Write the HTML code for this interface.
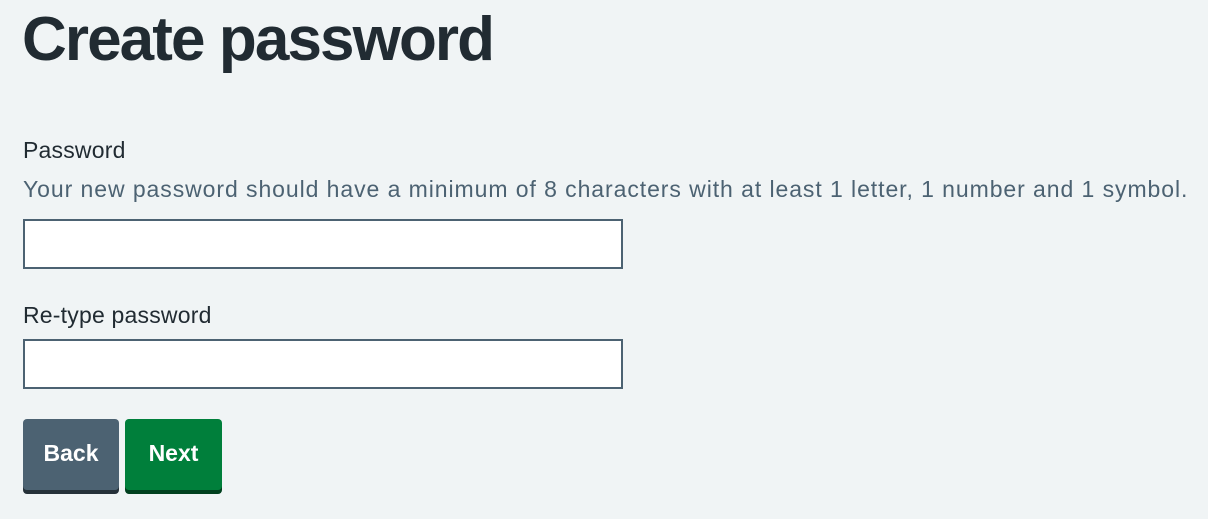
<!DOCTYPE html>
<html><head><style>
body{margin:0;background:#f0f4f5;font-family:"Liberation Sans",sans-serif;color:#212b32;width:1208px;height:519px;overflow:hidden;position:relative}
.a{position:absolute;margin:0;white-space:nowrap}
h1{font-size:62px;font-weight:bold;left:22px;top:4px;letter-spacing:-1.9px}
.l{font-size:23px;left:23px;letter-spacing:0.2px}
.h{color:#4c6272}
.i{position:absolute;left:23px;width:596px;height:46px;border:2px solid #4c6272;background:#fff}
.b{position:absolute;top:419px;height:71px;border-radius:4px;color:#fff;font-weight:bold;font-size:23px;text-align:center;line-height:68px}
</style></head><body>
<h1 class="a">Create password</h1>
<p class="a l" style="top:137px">Password</p>
<p class="a l h" style="top:176px;letter-spacing:0.93px">Your new password should have a minimum of 8 characters with at least 1 letter, 1 number and 1 symbol.</p>
<div class="i" style="top:219px"></div>
<p class="a l" style="top:302px">Re-type password</p>
<div class="i" style="top:339px"></div>
<div class="b" style="left:23px;width:96px;background:#4c6272;box-shadow:0 4px 0 #263139">Back</div>
<div class="b" style="left:125px;width:97px;background:#007f3b;box-shadow:0 4px 0 #00401e">Next</div>
</body></html>
